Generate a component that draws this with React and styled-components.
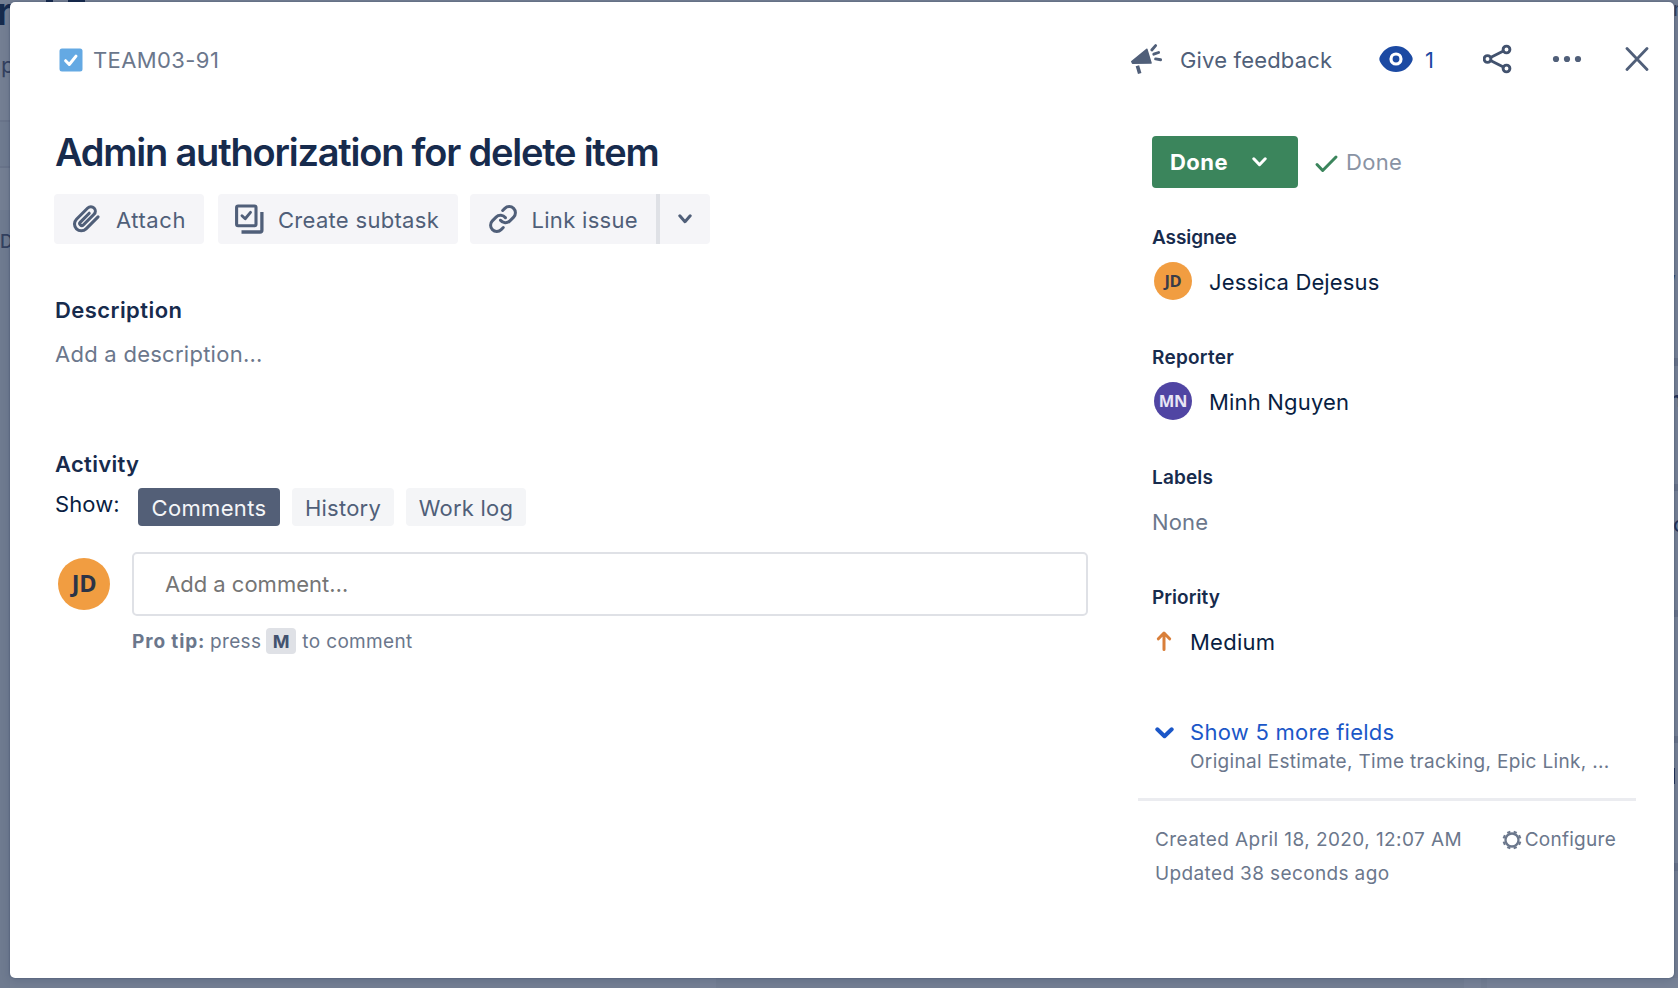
import React from "react";
import styled, { createGlobalStyle } from "styled-components";
import { Link } from "lucide-react";

const color = {
  heading: "#172b4d",
  text: "#091e42",
  subtle: "#6b778c",
  button: "#505f79",
  neutral: "#f4f5f7",
  line: "#dfe1e6",
  green: "#3b855c",
  blue: "#1b57c8",
};

const GlobalStyle = createGlobalStyle`
  * { box-sizing: border-box; }
  body {
    margin: 0;
    overflow: hidden;
    font-family: Inter, "Liberation Sans", sans-serif;
    font-size: 22px;
    color: ${color.text};
  }
  button, input { font: inherit; color: inherit; border: 0; margin: 0; padding: 0; background: none; letter-spacing: inherit; }
  svg { display: block; flex: none; }
`;

/* Dimmed board page underneath the dialog */
const Page = styled.div`
  position: relative;
  display: flex;
  width: 1678px;
  height: 988px;
  padding: 2px 4px 10px 10px;
  overflow: hidden;
  background: #747f93;
`;
const Shade = styled.div`
  position: absolute;
  left: ${(p) => p.$x}px;
  top: ${(p) => p.$y}px;
  width: ${(p) => p.$w}px;
  height: ${(p) => p.$h}px;
  background: ${(p) => p.$c};
`;
const Peek = styled.span`
  position: absolute;
  left: ${(p) => p.$x}px;
  top: ${(p) => p.$y}px;
  font-size: ${(p) => p.$size}px;
  font-weight: ${(p) => p.$weight || 400};
  line-height: 1;
  color: ${(p) => p.$c || "#33415f"};
`;

const Dialog = styled.main`
  position: relative;
  display: flex;
  flex-direction: column;
  flex: 1;
  border-radius: 5px;
  background: #fff;
  box-shadow: 0 0 2px rgba(9, 30, 66, 0.4), 0 3px 10px rgba(9, 30, 66, 0.15);
`;

const Header = styled.header`
  display: flex;
  align-items: center;
  height: 116px;
  padding: 0 25px 0 49px;
`;
const IssueKey = styled.a`
  display: flex;
  align-items: center;
  gap: 10px;
  margin-right: auto;
  color: ${color.subtle};
  letter-spacing: 0.4px;
  svg { margin-top: -1px; }
`;
const HeaderAction = styled.button`
  display: flex;
  align-items: center;
  width: ${(p) => p.$width}px;
  height: 40px;
  gap: ${(p) => p.$gap || 0}px;
  color: ${(p) => p.$color || color.button};
  letter-spacing: 0.17px;
  white-space: nowrap;
  svg { margin-top: -2px; }
`;

const Body = styled.div`
  display: flex;
  gap: 64px;
  padding-left: 44px;
`;
const Main = styled.section`
  width: 1034px;
  padding-top: 14px;
`;
const Side = styled.aside`
  width: 484px;
  padding-top: 18px;
`;

const Title = styled.h1`
  margin: 0;
  padding-left: 1px;
  font-size: 38px;
  font-weight: 600;
  line-height: 40px;
  letter-spacing: -1.21px;
  color: ${color.heading};
`;
const Toolbar = styled.div`
  display: flex;
  margin-top: 22px;
`;
const ToolButton = styled.button`
  display: flex;
  align-items: center;
  width: ${(p) => p.$width}px;
  height: 50px;
  margin-right: ${(p) => p.$after || 0}px;
  && { padding-left: ${(p) => p.$pad}px; }
  gap: ${(p) => p.$gap || 0}px;
  border-radius: ${(p) => p.$radius || "4px"};
  background: #f5f5f8;
  color: ${color.button};
  letter-spacing: ${(p) => p.$spacing || 0.3}px;
  white-space: nowrap;
  span { padding-top: 1px; }
`;
const SplitLine = styled.div`
  width: 4px;
  height: 50px;
  background: ${color.line};
`;

const SectionTitle = styled.h2`
  margin: ${(p) => p.$top}px 0 0;
  padding-left: 1px;
  font-size: 22px;
  font-weight: 600;
  line-height: 28px;
  letter-spacing: ${(p) => p.$spacing}px;
  color: ${color.heading};
`;
const DescriptionHint = styled.p`
  margin: 16px 0 0;
  padding-left: 1px;
  line-height: 28px;
  letter-spacing: 0.26px;
  color: ${color.subtle};
`;
const Tabs = styled.div`
  display: flex;
  margin-top: 10px;
  height: 38px;
`;
const TabsLabel = styled.span`
  width: 84px;
  padding-left: 1px;
  line-height: 32px;
  letter-spacing: 0.1px;
`;
const Tab = styled.button`
  width: ${(p) => p.$width}px;
  height: 38px;
  margin-right: ${(p) => p.$after || 0}px;
  && { padding-top: 2px; }
  border-radius: 4px;
  background: ${(p) => (p.$active ? "#535f77" : color.neutral)};
  color: ${(p) => (p.$active ? "#f4f5f7" : color.button)};
  letter-spacing: ${(p) => p.$spacing}px;
`;

const Avatar = styled.span`
  display: flex;
  align-items: center;
  justify-content: center;
  flex: none;
  width: ${(p) => p.$size}px;
  height: ${(p) => p.$size}px;
  border-radius: 50%;
  background: ${(p) => p.$bg};
  color: ${(p) => p.$fg};
  font-family: "Open Sans", "Noto Sans", sans-serif;
  font-size: ${(p) => p.$font}px;
  font-weight: 700;
  line-height: 1;
  letter-spacing: -0.3px;
`;
const CommentRow = styled.div`
  display: flex;
  align-items: center;
  gap: 22px;
  margin-top: 26px;
  padding-left: 4px;
`;
const CommentInput = styled.input`
  flex: 1;
  height: 64px;
  && {
    padding: 0 31px;
    border: 2px solid ${color.line};
    border-radius: 5px;
  }
  &::placeholder { color: #757575; opacity: 1; }
`;
const Tip = styled.p`
  display: flex;
  align-items: center;
  height: 26px;
  margin: 12px 0 0 78px;
  font-size: 19px;
  letter-spacing: 0.35px;
  color: ${color.subtle};
  white-space: pre;
  strong { width: 78px; letter-spacing: 0.9px; }
`;
const Key = styled.kbd`
  display: flex;
  align-items: center;
  justify-content: center;
  width: 30px;
  height: 26px;
  margin: 0 6px 0 5px;
  border-radius: 4px;
  background: ${color.line};
  color: #42526e;
  font: 700 18px Inter, sans-serif;
`;

const StatusRow = styled.div`
  display: flex;
  align-items: center;
  height: 52px;
`;
const StatusButton = styled.button`
  display: flex;
  align-items: center;
  width: 146px;
  height: 52px;
  gap: 24px;
  && { padding-left: 18px; }
  border-radius: 4px;
  background: ${color.green};
  color: #fff;
  font-weight: 700;
  letter-spacing: 0.45px;
`;
const Resolution = styled.span`
  display: flex;
  align-items: center;
  gap: 7px;
  margin-left: 16px;
  color: #8993a4;
  letter-spacing: 0.3px;
  svg { margin-top: 2px; }
`;
const Field = styled.div`
  margin-top: ${(p) => p.$top || 44}px;
`;
const FieldName = styled.h3`
  margin: 0;
  padding-top: 1px;
  height: 26px;
  font-size: 19px;
  font-weight: 600;
  line-height: 26px;
  letter-spacing: ${(p) => p.$spacing}px;
  color: ${color.heading};
`;
const FieldValue = styled.div`
  display: flex;
  align-items: center;
  height: 38px;
  margin-top: 12px;
  padding-left: ${(p) => p.$pad || 0}px;
  gap: ${(p) => p.$gap || 0}px;
  color: ${(p) => (p.$empty ? color.subtle : color.text)};
  letter-spacing: ${(p) => p.$spacing}px;
  span:last-child { padding-top: 2px; }
`;
const ShowMore = styled.button`
  display: grid;
  grid-template-columns: 38px 1fr;
  align-items: center;
  margin-top: 57px;
  width: 484px;
  text-align: left;
  color: ${color.blue};
  svg { margin: 2px 0 0 3px; }
`;
const ShowMoreLabel = styled.span`
  line-height: 30px;
  letter-spacing: 0.26px;
`;
const ShowMoreHint = styled.span`
  grid-column: 2;
  height: 27px;
  padding-top: 2px;
  font-size: 19px;
  line-height: 26px;
  letter-spacing: 0.33px;
  color: ${color.subtle};
  white-space: nowrap;
`;
const Divider = styled.hr`
  width: 498px;
  height: 3px;
  margin: 24px 0 0 -14px;
  border: 0;
  background: #ebecf0;
`;
const Footer = styled.footer`
  display: flex;
  justify-content: space-between;
  margin-top: 22px;
  padding: 0 20px 0 3px;
  font-size: 19px;
  line-height: 34px;
  color: ${color.subtle};
`;
const FooterLine = styled.div`
  letter-spacing: ${(p) => p.$spacing}px;
`;
const Configure = styled.button`
  display: flex;
  align-items: center;
  gap: 3px;
  height: 34px;
  letter-spacing: 0.27px;
`;

const TaskIcon = () => (
  <svg width="24" height="24" viewBox="0 0 24 24" fill="none">
    <rect x="0.5" y="0.5" width="23" height="23" rx="2.5" fill="#64a9e3" />
    <path d="M6.600 12.700 10.300 16.500 17 8.100" stroke="#fff" strokeWidth="3" strokeLinecap="round" strokeLinejoin="round" />
  </svg>
);
const MegaphoneIcon = () => (
  <svg width="32" height="32" viewBox="1131 43 32 32" fill="none" stroke="currentColor">
    <path d="M1131.800 61.500 1146.800 49.300 1151 63 1132.600 63.200Z" fill="currentColor" strokeWidth="1.600" strokeLinejoin="round" />
    <path d="M1137.400 65.800 1139.700 73.600" strokeWidth="3.600" />
    <path d="M1151.800 50 1155.600 45.600M1153.800 54.200 1158.600 52.500M1155.600 58.900 1160.600 59.800" strokeWidth="2.900" strokeLinecap="round" />
  </svg>
);
const EyeIcon = () => (
  <svg width="34" height="28" viewBox="0 0 34 28">
    <path d="M17 1C9.500 1 5 5 1.600 10.300Q.3 12.300.3 14t1.300 3.700C5 23 9.500 27 17 27s12-4 15.400-9.300Q33.700 15.700 33.700 14t-1.300-3.700C29 5 24.500 1 17 1Z" fill="#1c4aa3" />
    <circle cx="17" cy="14" r="5" fill="#1c4aa3" stroke="#fff" strokeWidth="3.200" />
  </svg>
);
const ShareIcon = () => (
  <svg width="30" height="30" viewBox="0 0 30 30" fill="none" stroke="#42526e" strokeWidth="2.900">
    <path d="M8 13.300 20.400 7M8 16.700 20.400 23" />
    <circle cx="4.500" cy="15" r="3.400" />
    <circle cx="23.500" cy="5.500" r="3.400" />
    <circle cx="23.500" cy="24.500" r="3.400" />
  </svg>
);
const MoreIcon = () => (
  <svg width="30" height="8" viewBox="0 0 30 8" fill="#505f79">
    <circle cx="4" cy="4" r="3.100" />
    <circle cx="15" cy="4" r="3.100" />
    <circle cx="26" cy="4" r="3.100" />
  </svg>
);
const CloseIcon = () => (
  <svg width="24" height="24" viewBox="0 0 24 24" fill="none">
    <path d="M2 1.500 22 22.500M22 1.500 2 22.500" stroke="#505f79" strokeWidth="2.800" strokeLinecap="round" />
  </svg>
);
const ClipIcon = () => (
  <svg width="30" height="30" viewBox="-14 -15 30 30" fill="none" stroke="currentColor" strokeWidth="2.900" strokeLinecap="round">
    <path
      transform="rotate(-45) scale(1.060)"
      d="M9.500 6.600H-6.500A6.400 6.400 0 0 1-6.500-6.200H8.500A4.200 4.200 0 0 1 8.500 2.200H-5.800A1.950 1.950 0 0 1-5.800-1.700H6"
    />
  </svg>
);
const SubtaskIcon = () => (
  <svg width="30" height="30" viewBox="0 0 30 30" fill="none" stroke="currentColor">
    <rect x="2.600" y="2" width="19.400" height="19.800" rx="1.500" strokeWidth="3.100" />
    <path d="M8 11.800 11.200 14.700 16.500 8.400" strokeWidth="2.900" strokeLinecap="round" strokeLinejoin="round" />
    <path d="M27.900 8V26.200Q27.900 28 26.100 28H7.500" strokeWidth="3.300" />
  </svg>
);
const Chevron = ({ w, h, stroke = 3 }) => (
  <svg width={w} height={h} viewBox={`0 0 ${w} ${h}`} fill="none">
    <path
      d={`M${stroke / 2 + 0.3} ${stroke / 2 + 0.3} ${w / 2} ${h - stroke / 2 - 0.8} ${w - stroke / 2 - 0.3} ${stroke / 2 + 0.3}`}
      stroke="currentColor"
      strokeWidth={stroke}
      strokeLinecap="round"
      strokeLinejoin="round"
    />
  </svg>
);
const DoneCheck = () => (
  <svg width="25" height="20" viewBox="0 0 25 20" fill="none">
    <path d="M3 11.500 8.700 17.500 22 4" stroke={color.green} strokeWidth="3" strokeLinecap="round" strokeLinejoin="round" />
  </svg>
);
const PriorityIcon = () => (
  <svg width="16" height="20" viewBox="0 0 16 20" fill="none">
    <path d="M8 18.500V2.200M2.400 7.800 8 2 13.600 7.800" stroke="#d97f3a" strokeWidth="3" strokeLinecap="round" strokeLinejoin="round" />
  </svg>
);
const GearIcon = () => (
  <svg width="20" height="20" viewBox="-10 -10 20 20" fill="none" stroke="currentColor">
    <circle r="6.500" strokeWidth="2.300" />
    {[22.5, 67.5, 112.5, 157.5, 202.5, 247.5, 292.5, 337.5].map((a) => (
      <path key={a} d="M-1.700-8.400H1.700" strokeWidth="2" transform={`rotate(${a})`} />
    ))}
  </svg>
);

const shades = [
  [0, 120, 10, 2, "#69748a"],
  [0, 122, 10, 44, "#6f7b90"],
  [0, 166, 10, 2, "#69748a"],
  [0, 210, 10, 778, "#6f7b90"],
  [700, 978, 16, 10, "#788397"],
  [1464, 978, 17, 10, "#788397"],
  [1487, 978, 191, 10, "#788397"],
  [1674, 210, 4, 660, "#778296"],
  [1674, 358, 4, 8, "#687389"],
  [1674, 484, 4, 7, "#687389"],
  [1674, 610, 4, 7, "#687389"],
  [1674, 736, 4, 7, "#687389"],
  [1674, 863, 4, 8, "#687389"],
  [46, 0, 7, 2, "#172b4d"],
  [68, 0, 17, 2, "#172b4d"],
  [1674, 768, 1, 16, "#25345a"],
];

export default function App() {
  return (
    <Page>
      <GlobalStyle />
      {shades.map(([x, y, w, h, c]) => (
        <Shade key={`${x}-${y}`} $x={x} $y={y} $w={w} $h={h} $c={c} />
      ))}
      <Peek $x={-3} $y={-8} $size={38} $weight={600} $c="#172b4d">r</Peek>
      <Peek $x={1} $y={54} $size={22}>p</Peek>
      <Peek $x={0} $y={233} $size={18} $weight={500}>D</Peek>
      <Peek $x={1673} $y={-1} $size={20}>n</Peek>
      <Peek $x={1671} $y={260} $size={20}>,</Peek>
      <Peek $x={1669} $y={388} $size={22} $weight={600} $c="#25345a">n</Peek>
      <Peek $x={1673} $y={513} $size={22} $c="#25345a">o</Peek>

      <Dialog>
        <Header>
          <IssueKey>
            <TaskIcon />
            <span>TEAM03-91</span>
          </IssueKey>
          <HeaderAction $width={248} $gap={17}>
            <MegaphoneIcon />
            Give feedback
          </HeaderAction>
          <HeaderAction $width={104} $gap={12} $color="#1c4aa3">
            <EyeIcon />
            1
          </HeaderAction>
          <HeaderAction $width={69}><ShareIcon /></HeaderAction>
          <HeaderAction $width={73}><MoreIcon /></HeaderAction>
          <HeaderAction $width={24}><CloseIcon /></HeaderAction>
        </Header>

        <Body>
          <Main>
            <Title>Admin authorization for delete item</Title>
            <Toolbar>
              <ToolButton $width={150} $after={14} $pad={18} $gap={14} $spacing={0.55}>
                <ClipIcon />
                <span>Attach</span>
              </ToolButton>
              <ToolButton $width={240} $after={12} $pad={16} $gap={14}>
                <SubtaskIcon />
                <span>Create subtask</span>
              </ToolButton>
              <ToolButton $width={186} $pad={18} $gap={13.5} $radius="4px 0 0 4px">
                <Link size={30} strokeWidth={2.4} />
                <span>Link issue</span>
              </ToolButton>
              <SplitLine />
              <ToolButton $width={50} $pad={18} $radius="0 4px 4px 0">
                <Chevron w={14} h={10} />
              </ToolButton>
            </Toolbar>

            <SectionTitle $top={52} $spacing={0.43}>Description</SectionTitle>
            <DescriptionHint>Add a description...</DescriptionHint>

            <SectionTitle $top={82} $spacing={0.3}>Activity</SectionTitle>
            <Tabs>
              <TabsLabel>Show:</TabsLabel>
              <Tab $active $width={142} $after={12} $spacing={0.35}>Comments</Tab>
              <Tab $width={102} $after={12} $spacing={0.23}>History</Tab>
              <Tab $width={120} $spacing={0.2}>Work log</Tab>
            </Tabs>
            <CommentRow>
              <Avatar $size={52} $font={23.5} $bg="#f19d41" $fg="#2c3447">JD</Avatar>
              <CommentInput placeholder="Add a comment…" />
            </CommentRow>
            <Tip>
              <strong>Pro tip:</strong>press<Key>M</Key>to comment
            </Tip>
          </Main>

          <Side>
            <StatusRow>
              <StatusButton>
                Done
                <Chevron w={15} h={10} />
              </StatusButton>
              <Resolution>
                <DoneCheck />
                Done
              </Resolution>
            </StatusRow>
            <Field $top={36}>
              <FieldName $spacing={-0.1}>Assignee</FieldName>
              <FieldValue $pad={2} $gap={17} $spacing={0.14}>
                <Avatar $size={38} $font={16.5} $bg="#f19d41" $fg="#3a3c48">JD</Avatar>
                <span>Jessica Dejesus</span>
              </FieldValue>
            </Field>
            <Field>
              <FieldName $spacing={0.25}>Reporter</FieldName>
              <FieldValue $pad={2} $gap={17} $spacing={0.18}>
                <Avatar $size={38} $font={16.5} $bg="#5045a3" $fg="#e8e6f5">MN</Avatar>
                <span>Minh Nguyen</span>
              </FieldValue>
            </Field>
            <Field>
              <FieldName $spacing={0.15}>Labels</FieldName>
              <FieldValue $empty $spacing={0.15}>
                <span>None</span>
              </FieldValue>
            </Field>
            <Field>
              <FieldName $spacing={0.05}>Priority</FieldName>
              <FieldValue $pad={4} $gap={18} $spacing={0.25}>
                <PriorityIcon />
                <span>Medium</span>
              </FieldValue>
            </Field>
            <ShowMore>
              <Chevron w={19} h={12} stroke={4} />
              <ShowMoreLabel>Show 5 more fields</ShowMoreLabel>
              <ShowMoreHint>Original Estimate, Time tracking, Epic Link, ...</ShowMoreHint>
            </ShowMore>
            <Divider />
            <Footer>
              <div>
                <FooterLine $spacing={0.42}>Created April 18, 2020, 12:07 AM</FooterLine>
                <FooterLine $spacing={0.37}>Updated 38 seconds ago</FooterLine>
              </div>
              <Configure>
                <GearIcon />
                Configure
              </Configure>
            </Footer>
          </Side>
        </Body>
      </Dialog>
    </Page>
  );
}
